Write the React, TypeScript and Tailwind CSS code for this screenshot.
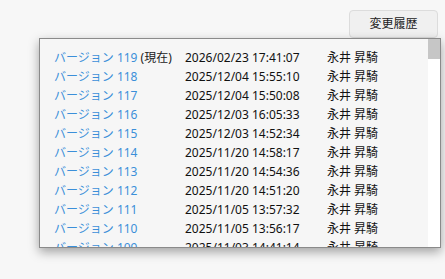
import React from 'react';

const ROWS = [
  { v: 119, current: true, date: '2026/02/23 17:41:07' },
  { v: 118, date: '2025/12/04 15:55:10' },
  { v: 117, date: '2025/12/04 15:50:08' },
  { v: 116, date: '2025/12/03 16:05:33' },
  { v: 115, date: '2025/12/03 14:52:34' },
  { v: 114, date: '2025/11/20 14:58:17' },
  { v: 113, date: '2025/11/20 14:54:36' },
  { v: 112, date: '2025/11/20 14:51:20' },
  { v: 111, date: '2025/11/05 13:57:32' },
  { v: 110, date: '2025/11/05 13:56:17' },
  { v: 109, date: '2025/11/03 14:41:14' },
  { v: 108, date: '2025/10/30 11:20:45' },
];

export default function App() {
  return (
    <div
      className="w-[445px] h-[279px] bg-[#f7f7f7] relative overflow-hidden text-[12px]"
      style={{ fontFamily: '"Noto Sans", "Noto Sans CJK JP", sans-serif' }}
    >
      <div className="flex justify-end pt-[10px] pr-[7px]">
        <button className="w-[89px] h-[28px] rounded-[4px] border border-[#dcdcdc] bg-[#f0f0f0] text-[#222] text-[12px] leading-none">
          変更履歴
        </button>
      </div>

      <div className="absolute left-[39px] top-[38px] w-[402px] h-[210px] border border-[#8a8a8a] bg-[#f6f6f6] shadow-[0_4px_10px_rgba(0,0,0,0.35)] flex overflow-hidden">
        <div className="flex-1 pt-[9px] pl-[14px] overflow-hidden">
          {ROWS.map((r) => (
            <div key={r.v} className="flex h-[19px] items-center whitespace-nowrap">
              <div className="w-[131px] shrink-0">
                <span className="text-[#3b8fd9]">バージョン {r.v}</span>
                {r.current && <span className="text-[#222]"> (現在)</span>}
              </div>
              <div className="w-[142px] shrink-0 text-[#111]">{r.date}</div>
              <div className="text-[#111]">永井 昇騎</div>
            </div>
          ))}
        </div>
        <div className="w-[12px] shrink-0 bg-white">
          <div className="h-[20px] bg-[#c6c6c6]" />
        </div>
      </div>
    </div>
  );
}
